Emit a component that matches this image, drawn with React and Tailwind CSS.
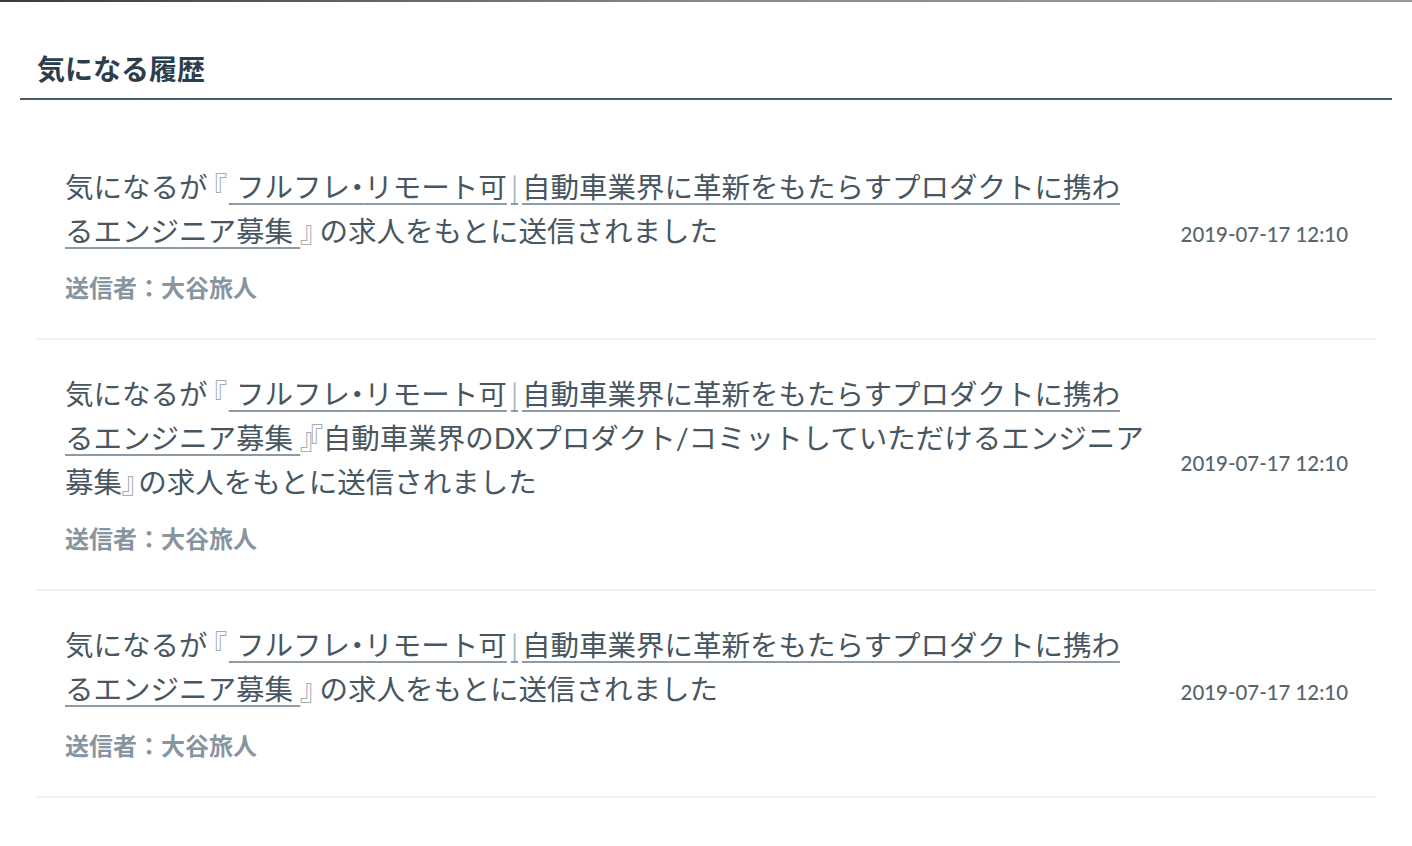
const FONT = "font-['Lato','Noto_Sans_CJK_JP',sans-serif]";

const SENDER = '大谷旅人';
const MAIN_JOB_HEAD = ['フルフレ', 'リモート可'];
const MAIN_JOB_TAIL = '自動車業界に革新をもたらすプロダクトに携わるエンジニア募集';

const history = [
  { id: 1, extra: null, sentAt: '2019-07-17 12:10' },
  { id: 2, extra: '自動車業界のDXプロダクト/コミットしていただけるエンジニア募集', sentAt: '2019-07-17 12:10' },
  { id: 3, extra: null, sentAt: '2019-07-17 12:10' },
];

export default function App() {
  return (
    <div className={`min-h-screen bg-white ${FONT}`}>
      <div className="h-[2px] bg-gradient-to-r from-[#3b3b3b] via-[#8a8a8a] to-[#9a9a9a]" />
      <div className="px-[20px]">
        <div className="pt-[47px] pb-[9px] pl-[17px] border-b-2 border-[#4a5a67]">
          <h1 className="text-[28px] leading-[40px] font-bold text-[#2c3e4c]">気になる履歴</h1>
        </div>

        <ul className="pt-[33px] px-[16px]">
          {history.map((item) => (
            <HistoryRow key={item.id} item={item} />
          ))}
        </ul>
      </div>
    </div>
  );
}

function Bracket({ children, className = '' }) {
  return (
    <span className={`text-[#a3acb3] [font-feature-settings:'palt'] ${className}`}>{children}</span>
  );
}

function HistoryRow({ item }) {
  return (
    <li className="flex items-center pl-[29px] pr-[28px] pt-[32px] pb-[34px] border-b-2 border-[#eef0f2]">
      <div className="w-[1080px] shrink-0">
        <p className="text-[28.5px] leading-[44px] text-[#475660]">
          気になるが
          <Bracket className="pl-[5px] pr-[2px]">『</Bracket>
          <a
            href="#"
            className="underline decoration-2 decoration-[#8d9ba6] underline-offset-[5px]"
          >
            {' '}
            {MAIN_JOB_HEAD[0]}
            <span className="[font-feature-settings:'palt']">・</span>
            {MAIN_JOB_HEAD[1]}
            <span className="px-[4px] text-[#b4bdc4]">|</span>
            {MAIN_JOB_TAIL}{' '}
          </a>
          {item.extra ? (
            <>
              <Bracket>』</Bracket>
              <Bracket className="-ml-[6px]">『</Bracket>
              {item.extra}
              <Bracket className="pr-[2px]">』</Bracket>
            </>
          ) : (
            <Bracket className="pr-[5px]">』</Bracket>
          )}
          の求人をもとに送信されました
        </p>
        <p className="mt-[19px] text-[24px] leading-[32px] font-bold text-[#8795a0]">
          送信者：{SENDER}
        </p>
      </div>
      <span className="ml-auto shrink-0 text-[20.4px] font-medium text-[#56666f]">{item.sentAt}</span>
    </li>
  );
}
